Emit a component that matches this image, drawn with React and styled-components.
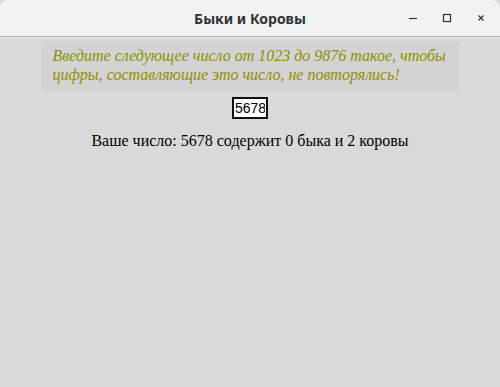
import React from 'react';
import styled, { createGlobalStyle } from 'styled-components';

const GlobalStyle = createGlobalStyle`
  html, body {
    margin: 0;
    padding: 0;
    background: #d9d9d9;
  }
`;

const Window = styled.div`
  width: 500px;
  height: 387px;
  display: flex;
  flex-direction: column;
  background: #d9d9d9;
  overflow: hidden;
`;

const TitleBar = styled.header`
  height: 36px;
  flex: none;
  display: flex;
  align-items: center;
  justify-content: center;
  position: relative;
  background: #f2f2f2;
  border-radius: 8px 8px 0 0;
  border-bottom: 1px solid #b8b8b8;
  box-shadow: 0 1px 0 #e6e6e6;
`;

const Title = styled.h1`
  margin: 0;
  font-family: "Noto Sans", "DejaVu Sans", sans-serif;
  font-weight: bold;
  font-size: 14px;
  color: #2e3436;
`;

const Controls = styled.div`
  position: absolute;
  right: 2px;
  top: 0;
  height: 36px;
  display: flex;
  align-items: center;
`;

const ControlButton = styled.button`
  width: 34px;
  height: 36px;
  border: 0;
  padding: 0;
  background: none;
  display: flex;
  align-items: center;
  justify-content: center;
  color: #2e3436;
`;

const Content = styled.main`
  display: flex;
  flex-direction: column;
  align-items: center;
  padding-top: 5px;
`;

const Hint = styled.p`
  margin: 0;
  width: 417px;
  box-sizing: border-box;
  padding: 4px 11px 7px;
  background: #d3d3d3;
  font-family: "Liberation Serif", serif;
  font-style: italic;
  font-size: 16px;
  line-height: 19px;
  color: #8f8f00;
`;

const NumberInput = styled.input`
  margin-top: 6px;
  width: 36px;
  height: 22px;
  box-sizing: border-box;
  border: 2px solid #111;
  padding: 0 1px;
  background: #fff;
  font-family: "Liberation Sans", sans-serif;
  font-size: 14px;
  color: #000;
  outline: none;
`;

const Result = styled.p`
  margin: 13px 0 0;
  font-family: "Liberation Serif", serif;
  font-size: 16px;
  color: #000;
`;

const App = () => (
  <>
    <GlobalStyle />
    <Window>
      <TitleBar>
        <Title>Быки и Коровы</Title>
        <Controls>
          <ControlButton aria-label="Свернуть">
            <svg width="10" height="10" viewBox="0 0 10 10">
              <path d="M1 5.5h8" stroke="#2e3436" strokeWidth="1.2" />
            </svg>
          </ControlButton>
          <ControlButton aria-label="Развернуть">
            <svg width="10" height="10" viewBox="0 0 10 10">
              <rect x="1.5" y="1.5" width="7" height="7" fill="none" stroke="#2e3436" strokeWidth="1.2" />
            </svg>
          </ControlButton>
          <ControlButton aria-label="Закрыть">
            <svg width="10" height="10" viewBox="0 0 10 10">
              <path d="M2.5 2.5l5 5M7.5 2.5l-5 5" stroke="#2e3436" strokeWidth="1.2" />
            </svg>
          </ControlButton>
        </Controls>
      </TitleBar>
      <Content>
        <Hint>
          Введите следующее число от 1023 до 9876 такое, чтобы цифры,
          составляющие это число, не повторялись!
        </Hint>
        <NumberInput defaultValue="5678" />
        <Result>Ваше число: 5678 содержит 0 быка и 2 коровы</Result>
      </Content>
    </Window>
  </>
);

export default App;
